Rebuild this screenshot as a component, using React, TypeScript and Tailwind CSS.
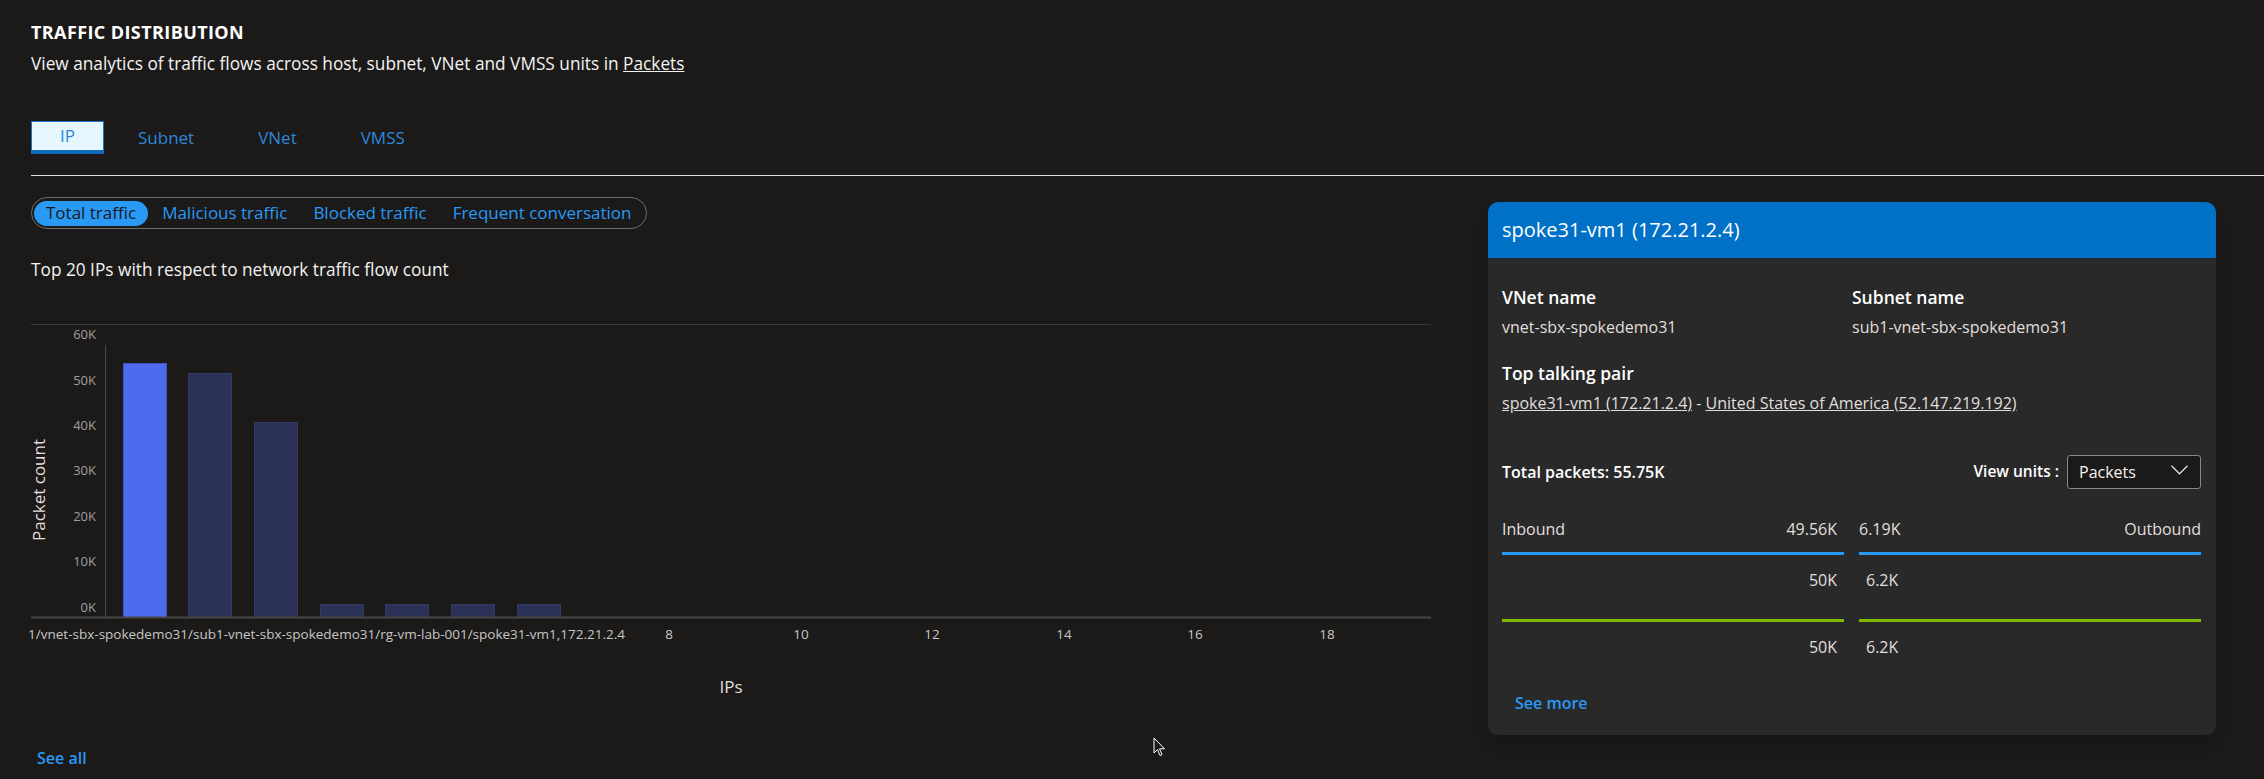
const bars = [
  { x: 92, top: 63, active: true },
  { x: 157, top: 73 },
  { x: 223, top: 122 },
  { x: 289, top: 304 },
  { x: 354, top: 304 },
  { x: 420, top: 304 },
  { x: 486, top: 304 },
];

const yTicks = [
  { label: '60K', y: 36 },
  { label: '50K', y: 82 },
  { label: '40K', y: 127 },
  { label: '30K', y: 172 },
  { label: '20K', y: 218 },
  { label: '10K', y: 263 },
  { label: '0K', y: 309 },
];

const xTicks = [
  { label: '8', x: 638 },
  { label: '10', x: 770 },
  { label: '12', x: 901 },
  { label: '14', x: 1033 },
  { label: '16', x: 1164 },
  { label: '18', x: 1296 },
];

function TrafficChart() {
  return (
    <svg width={1400} height={400} className="block overflow-visible" style={{ fontFamily: '"Open Sans", sans-serif' }}>
      <line x1={0} x2={1400} y1={24.5} y2={24.5} stroke="#3b3a39" />
      <line x1={74.5} x2={74.5} y1={45} y2={317} stroke="#4a4948" />
      {yTicks.map((t) => (
        <text key={t.label} x={65} y={t.y} textAnchor="end" dominantBaseline="middle" fontSize={13} fill="#a19f9d">
          {t.label}
        </text>
      ))}
      {bars.map((b) => (
        <rect
          key={b.x}
          x={b.x + 0.5}
          y={b.top + 0.5}
          width={43}
          height={317 - b.top}
          fill={b.active ? '#4f6bed' : '#2b3157'}
          stroke={b.active ? '#3d55c9' : '#323a66'}
        />
      ))}
      <line x1={0} x2={1400} y1={317.5} y2={317.5} stroke="#484644" strokeWidth={2} />
      <text x={594} y={335} textAnchor="end" dominantBaseline="middle" fontSize={13.5} fill="#c8c6c4">
        1/vnet-sbx-spokedemo31/sub1-vnet-sbx-spokedemo31/rg-vm-lab-001/spoke31-vm1,172.21.2.4
      </text>
      {xTicks.map((t) => (
        <text key={t.label} x={t.x} y={335} textAnchor="middle" dominantBaseline="middle" fontSize={13.5} fill="#c8c6c4">
          {t.label}
        </text>
      ))}
      <text x={700} y={388} textAnchor="middle" dominantBaseline="middle" fontSize={17} fill="#e1dfdd">
        IPs
      </text>
      <text
        x={9}
        y={190}
        textAnchor="middle"
        dominantBaseline="middle"
        fontSize={17}
        fill="#e1dfdd"
        transform="rotate(-90 9 190)"
      >
        Packet count
      </text>
    </svg>
  );
}

function DetailCard() {
  return (
    <div className="w-[728px] rounded-[10px] overflow-hidden bg-[#292929] shadow-lg">
      <div className="h-[56px] bg-[#0071c6] px-[14px] flex items-center text-[20px] text-white">
        spoke31-vm1 (172.21.2.4)
      </div>
      <div className="pl-[14px] pr-[15px] pt-[28px] pb-[21px]">
        <div className="grid grid-cols-[350px_1fr]">
          <div className="flex flex-col gap-[8px]">
            <span className="text-[17.5px] leading-[22px] font-semibold text-white">VNet name</span>
            <span className="text-[16px] leading-[22px] text-[#e1dfdd]">vnet-sbx-spokedemo31</span>
          </div>
          <div className="flex flex-col gap-[8px]">
            <span className="text-[17.5px] leading-[22px] font-semibold text-white">Subnet name</span>
            <span className="text-[16px] leading-[22px] text-[#e1dfdd]">sub1-vnet-sbx-spokedemo31</span>
          </div>
        </div>
        <div className="mt-[24px] flex flex-col gap-[8px]">
          <span className="text-[17.5px] leading-[22px] font-semibold text-white">Top talking pair</span>
          <span className="text-[16px] leading-[22px] text-[#e1dfdd]">
            <a className="underline">spoke31-vm1 (172.21.2.4)</a>
            {' - '}
            <a className="underline">United States of America (52.147.219.192)</a>
          </span>
        </div>
        <div className="mt-[41px] flex items-center justify-between">
          <span className="text-[16px] font-semibold text-white">Total packets: 55.75K</span>
          <div className="flex items-center gap-[8px]">
            <span className="text-[15.5px] font-semibold text-white">View units :</span>
            <button className="w-[134px] h-[34px] rounded-[3px] border border-[#8a8886] bg-[#1b1a19] pl-[11px] pr-[12px] flex items-center justify-between text-[16px] text-[#f3f2f1]">
              Packets
              <svg width="17" height="10" viewBox="0 0 17 10" className="-mt-[4px]">
                <polyline points="0.5,0.8 8.5,8.8 16.5,0.8" fill="none" stroke="#e1dfdd" strokeWidth="1.3" />
              </svg>
            </button>
          </div>
        </div>
        <div className="mt-[29px] grid grid-cols-2 gap-x-[15px] text-[16px] leading-[22px] text-[#e1dfdd]">
          <div className="flex justify-between pr-[7px]">
            <span>Inbound</span>
            <span>49.56K</span>
          </div>
          <div className="flex justify-between">
            <span>6.19K</span>
            <span>Outbound</span>
          </div>
          <div className="mt-[12px] h-[3px] bg-[#2899f5]" />
          <div className="mt-[12px] h-[3px] bg-[#2899f5]" />
          <div className="mt-[14px] text-right pr-[7px]">50K</div>
          <div className="mt-[14px] pl-[7px]">6.2K</div>
          <div className="mt-[28px] h-[3px] bg-[#7fba00]" />
          <div className="mt-[28px] h-[3px] bg-[#7fba00]" />
          <div className="mt-[14px] text-right pr-[7px]">50K</div>
          <div className="mt-[14px] pl-[7px]">6.2K</div>
        </div>
        <div className="mt-[34px] pl-[13px] text-[16px] leading-[22px] font-semibold text-[#2899f5]">See more</div>
      </div>
    </div>
  );
}

export default function App() {
  const filters = ['Total traffic', 'Malicious traffic', 'Blocked traffic', 'Frequent conversation'];
  return (
    <div
      className="relative min-h-[779px] w-[2264px] overflow-hidden bg-[#1b1a19] text-white pl-[31px] pt-[20px]"
      style={{ fontFamily: '"Open Sans", "Noto Sans", sans-serif' }}
    >
      <h1 className="text-[18px] leading-[24px] font-bold tracking-[0.4px]">TRAFFIC DISTRIBUTION</h1>
      <p className="mt-[9px] text-[17.25px] leading-[22px] text-[#f3f2f1]">
        View analytics of traffic flows across host, subnet, VNet and VMSS units in{' '}
        <a className="underline">Packets</a>
      </p>

      {/* Tabs */}
      <div className="mt-[46px] flex items-center h-[33px] text-[17px] text-[#2b88d8]">
        <div className="w-[73px] h-[33px] flex items-center justify-center bg-[#e6f6ff] border border-[#1f6fc5] border-b-4 border-b-[#0f6cbd]">
          IP
        </div>
        <span className="ml-[34px]">Subnet</span>
        <span className="ml-[64px]">VNet</span>
        <span className="ml-[64px]">VMSS</span>
      </div>
      <div className="mt-[21px] h-px bg-[#e1dfdd]" />

      <div className="flex gap-[57px]">
        {/* Left column */}
        <div className="w-[1400px]">
          <div className="mt-[21px] inline-flex items-center gap-[2px] h-[32px] rounded-full border border-[#6e6c6a] px-[2px] text-[17px]">
            {filters.map((f, i) => (
              <span
                key={f}
                className={
                  i === 0
                    ? 'h-[25px] px-[12px] rounded-full bg-[#2899f5] text-[#1b1a19] flex items-center'
                    : 'h-[25px] px-[12px] text-[#2899f5] flex items-center'
                }
              >
                {f}
              </span>
            ))}
          </div>
          <p className="mt-[30px] text-[17.25px] leading-[22px] text-[#f3f2f1]">
            Top 20 IPs with respect to network traffic flow count
          </p>
          <div className="mt-[19px]">
            <TrafficChart />
          </div>
          <div className="mt-[47px] pl-[6px] text-[16px] leading-[22px] font-semibold text-[#2899f5]">See all</div>
        </div>

        {/* Right column */}
        <div className="mt-[26px]">
          <DetailCard />
        </div>
      </div>

      {/* mouse cursor */}
      <svg className="absolute left-[1153px] top-[737px]" width="13" height="20" viewBox="0 0 13 20">
        <path d="M1 1 L1 16 L4.5 12.5 L7 18.5 L9 17.5 L6.5 11.8 L11.5 11.8 Z" fill="#1b1a19" stroke="#ffffff" strokeWidth="1" />
      </svg>
    </div>
  );
}
